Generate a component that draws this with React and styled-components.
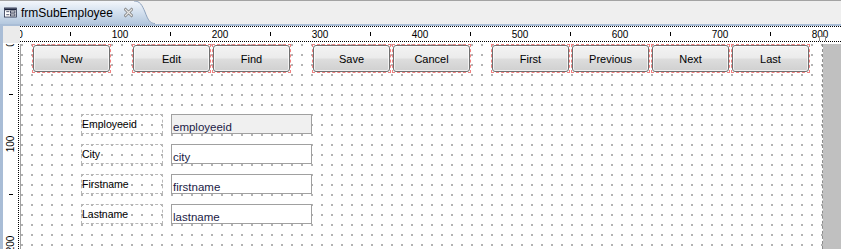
import React from "react";
import styled, { createGlobalStyle } from "styled-components";

const GlobalStyle = createGlobalStyle`
  html, body {
    margin: 0;
    padding: 0;
    overflow: hidden;
    background: #ffffff;
  }
`;

const Window = styled.div`
  width: 841px;
  height: 249px;
  display: flex;
  flex-direction: column;
  overflow: hidden;
  font-family: "Liberation Sans", Arial, sans-serif;
  background: #ffffff;
`;

const TabStrip = styled.div`
  height: 23px;
  display: flex;
  align-items: stretch;
  background: #efefef;
  border-top: 1px solid #a3a3a3;
  border-bottom: 2px solid #a9bdd6;
`;

const Tab = styled.div`
  display: flex;
  align-items: center;
  gap: 4px;
  padding-left: 4px;
  width: 129px;
  background: linear-gradient(#f3f6fb, #d6e2f0 45%, #b4c8de);
  font-size: 12px;
  color: #000;
`;

const TabTitle = styled.span`
  line-height: 14px;
  margin-right: 7px;
`;

const TabEnd = styled.svg`
  display: block;
  width: 22px;
  height: 23px;
`;

const Body = styled.div`
  flex: 1;
  display: grid;
  grid-template-columns: 17px 1fr;
  grid-template-rows: 18px 1fr;
  border-left: 3px solid #a9bdd6;
  background: #ffffff;
  min-height: 0;
`;

const Corner = styled.div`
  background: #ebebeb;
  height: 17px;
`;

const HRuler = styled.div`
  position: relative;
  height: 16px;
  box-sizing: border-box;
  border-top: 1px dotted #000;
  border-bottom: 1px dotted #000;
  overflow: hidden;
`;

const VRuler = styled.div`
  position: relative;
  width: 16px;
  box-sizing: border-box;
  border-right: 1px dotted #000;
  overflow: hidden;
`;

const HLabel = styled.span`
  position: absolute;
  top: 2px;
  width: 30px;
  margin-left: -15px;
  text-align: center;
  font-size: 10px;
  line-height: 12px;
  color: #000;
`;

const HTick = styled.span`
  position: absolute;
  top: 5px;
  width: 1px;
  height: 4px;
  background: #000;
`;

const VLabel = styled.span`
  position: absolute;
  left: -7px;
  width: 30px;
  height: 12px;
  margin-top: -6px;
  text-align: center;
  font-size: 10px;
  line-height: 12px;
  color: #000;
  transform: rotate(-90deg);
`;

const VTick = styled.span`
  position: absolute;
  left: 6px;
  width: 4px;
  height: 1px;
  background: #000;
`;

const Handle = styled.span`
  position: absolute;
  left: 799px;
  top: 9px;
  width: 5px;
  height: 5px;
  background: #fff;
  border: 1px solid #8a8a8a;
`;

const Stage = styled.div`
  display: flex;
  min-height: 0;
`;

const Canvas = styled.div`
  width: 801px;
  flex: none;
  border-left: 1px solid #a0a0a0;
  border-right: 1px dashed #8c8c8c;
  background-color: #ffffff;
  background-image: conic-gradient(at 2px 2px, transparent 75%, #b3b3b3 0);
  background-size: 10px 10px;
  display: flex;
  flex-direction: column;
`;

const Filler = styled.div`
  flex: 1;
  background: #c0c0c0;
`;

const Toolbar = styled.div`
  display: flex;
  gap: 21px;
  margin-left: 11px;
`;

const Group = styled.div`
  display: flex;
  gap: 1px;
  margin-left: ${(p) => (p.$pull ? "-1px" : "0")};
`;

const Selection = styled.div`
  width: 79px;
  height: 29px;
  box-sizing: border-box;
  border: 1px dashed #f08080;
`;

const Button = styled.div`
  height: 100%;
  box-sizing: border-box;
  border: 1px solid #707070;
  border-radius: 3px;
  background: linear-gradient(#f3f3f3, #ebebeb 48%, #dddddd 52%, #d0d0d0);
  box-shadow: inset 0 0 0 1px rgba(255, 255, 255, 0.7);
  display: flex;
  align-items: center;
  justify-content: center;
  font-size: 11px;
  color: #000;
`;

const Form = styled.div`
  display: grid;
  grid-template-columns: 82px 141px;
  grid-auto-rows: 20px;
  column-gap: 8px;
  row-gap: 10px;
  margin: 41px 0 0 60px;
`;

const Label = styled.div`
  box-sizing: border-box;
  border: 1px dashed #b8b8b8;
  padding-top: 3px;
  font-size: 10.5px;
  line-height: 12px;
  color: #000;
`;

const Field = styled.div`
  box-sizing: border-box;
  border: 1px solid #a0a0a0;
  background: ${(p) => (p.$readonly ? "#f0f0f0" : "#ffffff")};
  display: flex;
  align-items: flex-end;
  padding-left: 1px;
  font-size: 11.5px;
  line-height: 12px;
  color: #1b1b46;
`;

const FormIcon = () => (
  <svg width="17" height="13" viewBox="0 0 17 13">
    <rect x="0.5" y="0.5" width="16" height="12" fill="#fff" stroke="#1c2440" />
    <rect x="1" y="1" width="15" height="2.5" fill="#1c2440" />
    <rect x="3" y="5" width="4" height="1" fill="#1c2440" />
    <rect x="3" y="9" width="4" height="1" fill="#1c2440" />
    <rect x="8.5" y="4.5" width="6" height="2.5" fill="none" stroke="#1c2440" />
    <rect x="8.5" y="8.5" width="6" height="2.5" fill="none" stroke="#1c2440" />
  </svg>
);

const CloseIcon = () => (
  <svg width="12" height="11" viewBox="0 0 12 11">
    <path d="M2 1.5 L10 9.5 M10 1.5 L2 9.5" stroke="#7c7c7c" strokeWidth="3.8" strokeLinecap="square" />
    <path d="M2 1.5 L10 9.5 M10 1.5 L2 9.5" stroke="#e6e6e6" strokeWidth="1.8" strokeLinecap="square" />
  </svg>
);

const groups = [
  ["New"],
  ["Edit", "Find"],
  ["Save", "Cancel"],
  ["First", "Previous", "Next", "Last"],
];

const fields = [
  { label: "Employeeid", value: "employeeid", readonly: true },
  { label: "City", value: "city" },
  { label: "Firstname", value: "firstname" },
  { label: "Lastname", value: "lastname" },
];

const hMarks = [];
for (let n = 0; n <= 850; n += 50) hMarks.push(n);
const vMarks = [0, 50, 100, 150, 200];

export default function App() {
  return (
    <>
      <GlobalStyle />
      <Window>
        <TabStrip>
          <Tab>
            <FormIcon />
            <TabTitle>frmSubEmployee</TabTitle>
            <CloseIcon />
          </Tab>
          <TabEnd viewBox="0 0 22 23">
            <defs>
              <linearGradient id="tabg" x1="0" y1="0" x2="0" y2="1">
                <stop offset="0" stopColor="#f3f6fb" />
                <stop offset="0.45" stopColor="#d6e2f0" />
                <stop offset="1" stopColor="#b4c8de" />
              </linearGradient>
            </defs>
            <path d="M0 0 H1 C7 0 9 4 12 11 C15 19 17 23 22 23 H0 Z" fill="url(#tabg)" />
            <path d="M1 0 C7 0 9 4 12 11 C15 19 17 22.5 22 22.5" fill="none" stroke="#8da2bd" />
          </TabEnd>
        </TabStrip>
        <Body>
          <Corner />
          <HRuler>
            {hMarks.map((n) =>
              n % 100 === 0 ? (
                <HLabel key={n} style={{ left: n }}>{n}</HLabel>
              ) : (
                <HTick key={n} style={{ left: n }} />
              )
            )}
            <Handle />
          </HRuler>
          <VRuler>
            {vMarks.map((n) =>
              n % 100 === 0 ? (
                <VLabel key={n} style={{ top: n }}>{n}</VLabel>
              ) : (
                <VTick key={n} style={{ top: n }} />
              )
            )}
          </VRuler>
          <Stage>
            <Canvas>
              <Toolbar>
                {groups.map((g, i) => (
                  <Group key={i} $pull={i === 3}>
                    {g.map((b) => (
                      <Selection key={b}>
                        <Button>{b}</Button>
                      </Selection>
                    ))}
                  </Group>
                ))}
              </Toolbar>
              <Form>
                {fields.map((f) => (
                  <React.Fragment key={f.label}>
                    <Label>{f.label}</Label>
                    <Field $readonly={f.readonly}>{f.value}</Field>
                  </React.Fragment>
                ))}
              </Form>
            </Canvas>
            <Filler />
          </Stage>
        </Body>
      </Window>
    </>
  );
}
